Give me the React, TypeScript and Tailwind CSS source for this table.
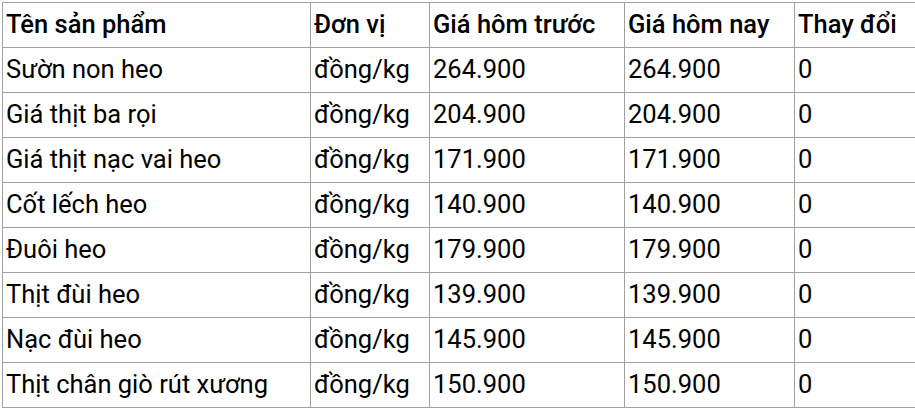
const rows: [string, string, string, string, string][] = [
  ["Sườn non heo", "đồng/kg", "264.900", "264.900", "0"],
  ["Giá thịt ba rọi", "đồng/kg", "204.900", "204.900", "0"],
  ["Giá thịt nạc vai heo", "đồng/kg", "171.900", "171.900", "0"],
  ["Cốt lếch heo", "đồng/kg", "140.900", "140.900", "0"],
  ["Đuôi heo", "đồng/kg", "179.900", "179.900", "0"],
  ["Thịt đùi heo", "đồng/kg", "139.900", "139.900", "0"],
  ["Nạc đùi heo", "đồng/kg", "145.900", "145.900", "0"],
  ["Thịt chân giò rút xương", "đồng/kg", "150.900", "150.900", "0"],
];

const headers = ["Tên sản phẩm", "Đơn vị", "Giá hôm trước", "Giá hôm nay", "Thay đổi"];
const widths = ["w-[308px]", "w-[119px]", "w-[195px]", "w-[170px]", "w-[121px]"];

export default function App() {
  return (
    <div className="h-[409px] w-[915px] overflow-hidden bg-white pl-[2px] pt-[2px] font-['Roboto',sans-serif] text-black">
      <table className="w-[913px] table-fixed border-collapse text-[25.5px] leading-none">
        <colgroup>
          {widths.map((w, i) => (
            <col key={i} className={w} />
          ))}
        </colgroup>
        <thead>
          <tr className="h-[45px]">
            {headers.map((h) => (
              <th key={h} className="border border-[#a0a0a0] px-[3px] text-left align-middle font-medium">
                {h}
              </th>
            ))}
          </tr>
        </thead>
        <tbody>
          {rows.map((r) => (
            <tr key={r[0]} className="h-[45px]">
              {r.map((c, i) => (
                <td key={i} className="border border-[#a0a0a0] px-[3px] align-middle">
                  {c}
                </td>
              ))}
            </tr>
          ))}
        </tbody>
      </table>
    </div>
  );
}
